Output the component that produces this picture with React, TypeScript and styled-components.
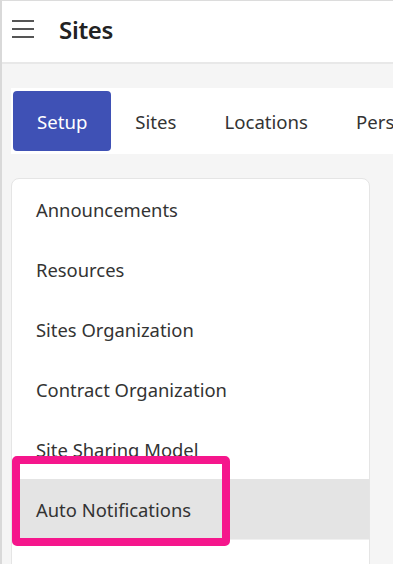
import * as React from 'react';
import styled, { createGlobalStyle } from 'styled-components';

const GlobalStyle = createGlobalStyle`
  html, body {
    margin: 0;
    padding: 0;
    background: #f5f5f5;
  }
  body {
    font-family: 'Noto Sans', 'Open Sans', Arial, sans-serif;
    color: #333;
  }
`;

const tabs = ['Setup', 'Sites', 'Locations', 'Persons'];
const menu = [
  'Announcements',
  'Resources',
  'Sites Organization',
  'Contract Organization',
  'Site Sharing Model',
  'Auto Notifications',
];

export default function App() {
  const [activeTab] = React.useState(0);
  const [activeItem] = React.useState(5);

  return (
    <>
      <GlobalStyle />
      <Page>
        <Header>
          <Burger aria-label='menu'>
            <svg width='24' height='20' viewBox='0 0 24 20'>
              <path d='M1 2h22M1 10h22M1 18h22' stroke='#555' strokeWidth='2' fill='none' />
            </svg>
          </Burger>
          <Title>Sites</Title>
        </Header>
        <Content>
          <TabBar>
            {tabs.map((t, i) => (
              <Tab key={t} $active={i === activeTab}>
                {t}
              </Tab>
            ))}
          </TabBar>
          <Card>
            {menu.map((m, i) => (
              <MenuItem key={m} $active={i === activeItem}>
                {m}
                {i === activeItem && <Highlight />}
              </MenuItem>
            ))}
          </Card>
        </Content>
      </Page>
    </>
  );
}

const Page = styled.div`
  height: 564px;
  overflow: hidden;
  border-left: 2px solid #d9d9d9;
  border-top: 1px solid #dcdcdc;
  box-sizing: border-box;
`;

const Header = styled.header`
  height: 61px;
  background: #fff;
  border-bottom: 2px solid #e8e8e8;
  display: flex;
  align-items: center;
  padding-left: 9px;
  gap: 24px;
`;

const Burger = styled.div`
  display: flex;
  align-items: center;
  width: 24px;
  height: 20px;
  margin-top: -6px;
`;

const Title = styled.h1`
  margin: 0 0 4px;
  font-size: 24px;
  font-weight: 600;
  color: #222;
  letter-spacing: -0.3px;
`;

const Content = styled.div`
  padding: 24px 0 0 9px;
  display: flex;
  flex-direction: column;
  gap: 24px;
`;

const TabBar = styled.div`
  background: #fff;
  height: 66px;
  display: flex;
  align-items: center;
  padding-left: 2px;
  overflow: hidden;
  white-space: nowrap;
`;

const Tab = styled.div<{ $active?: boolean }>`
  height: 60px;
  display: flex;
  align-items: center;
  padding: 0 24px;
  font-size: 18.6px;
  border-radius: 4px;
  flex-shrink: 0;
  color: ${(p) => (p.$active ? '#fff' : '#333')};
  background: ${(p) => (p.$active ? '#3f51b5' : 'transparent')};
`;

const Card = styled.div`
  width: 359px;
  background: #fff;
  border: 1px solid #e5e5e5;
  border-radius: 8px;
  box-sizing: border-box;
  min-height: 400px;
`;

const MenuItem = styled.div<{ $active?: boolean }>`
  position: relative;
  height: 60px;
  display: flex;
  align-items: center;
  padding-left: 24px;
  font-size: 18.4px;
  color: #333;
  background: ${(p) => (p.$active ? '#e4e4e4' : 'transparent')};
  border-bottom: ${(p) => (p.$active ? '1px solid #f0f0f0' : 'none')};
`;

const Highlight = styled.div`
  position: absolute;
  left: 0;
  top: -23px;
  width: 218px;
  height: 90px;
  border: 8px solid #f5168c;
  border-radius: 5px;
  box-sizing: border-box;
  pointer-events: none;
`;
